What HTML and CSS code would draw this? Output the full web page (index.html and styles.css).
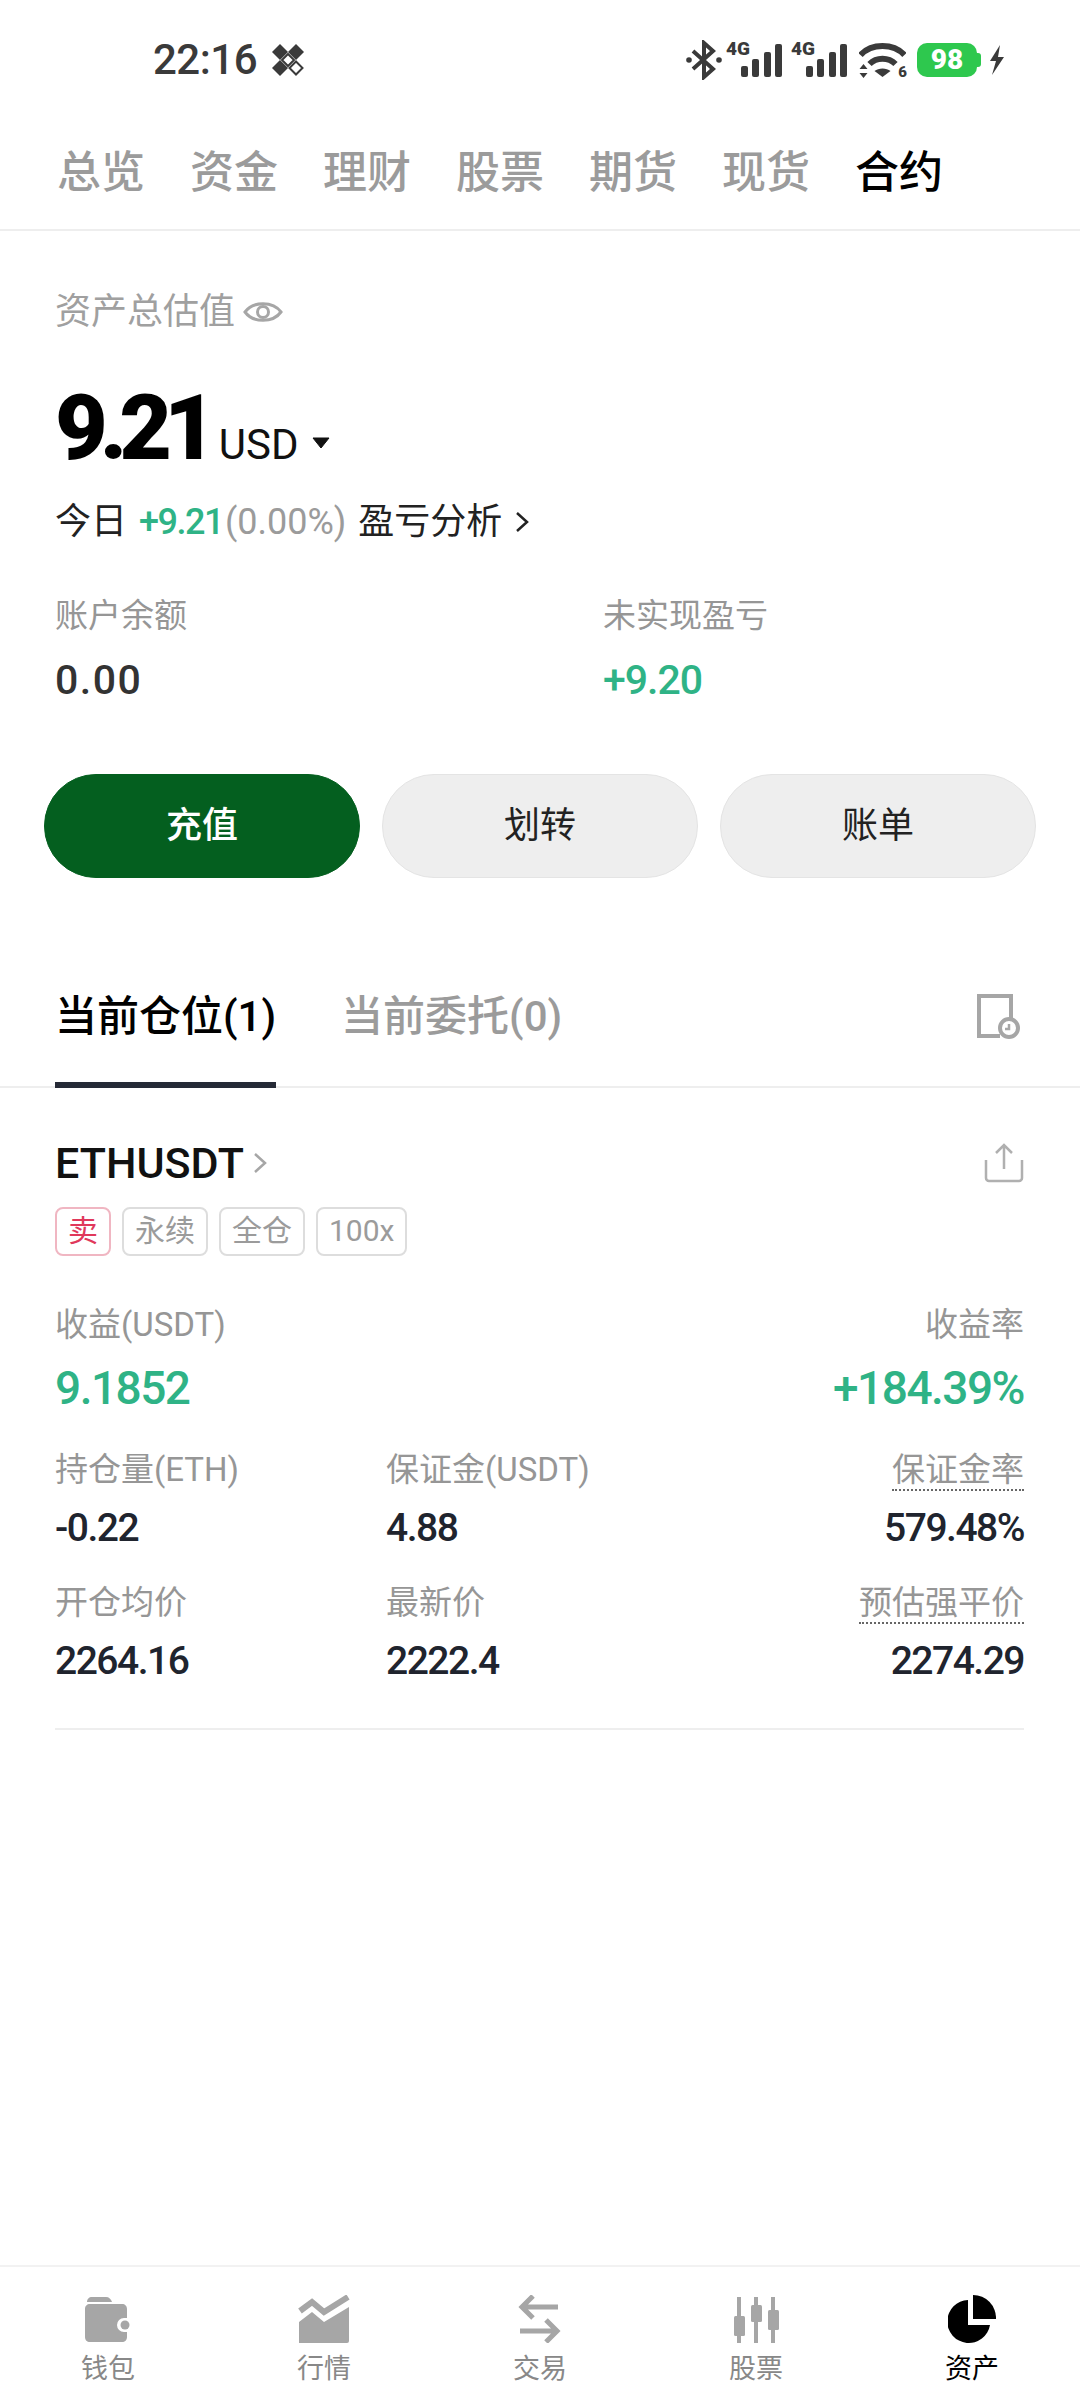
FILE: index.html
```html
<!DOCTYPE html>
<html>
<head>
	<meta charset="utf-8">
	<title>资产</title>
	<link rel="stylesheet" href="styles.css">
</head>
<body>
	<div class="page">
		<div class="status">
			<div class="status-left">
				<span class="clock">22:16</span>
				<svg class="notif" width="34" height="34" viewBox="0 0 34 34">
					<path d="M9 1l8 8-8 8-8-8z" fill="#3a3a3a"/>
					<path d="M25 1l8 8-8 8-8-8z" fill="#3a3a3a"/>
					<path d="M9 17l8 8-8 8-8-8z" fill="#3a3a3a"/>
					<path d="M25 18.500l6.500 6.500-6.500 6.500-6.500-6.500z" fill="none" stroke="#3a3a3a" stroke-width="2"/>
					<path d="M17 11l6 6-6 6-6-6z" fill="#fff" stroke="#3a3a3a" stroke-width="2"/>
				</svg>
			</div>
			<div class="status-right">
				<svg class="bt" width="36" height="40" viewBox="0 0 36 38">
					<path d="M7 10l20 18-9 8V2l9 8L7 28" fill="none" stroke="#3a3a3a" stroke-width="4"/>
					<circle cx="3" cy="19" r="2.800" fill="#3a3a3a"/>
					<circle cx="33" cy="19" r="2.800" fill="#3a3a3a"/>
				</svg>
				<div class="signal">
					<span class="net">4G</span>
					<i class="b1"></i><i class="b2"></i><i class="b3"></i><i class="b4"></i>
				</div>
				<div class="signal">
					<span class="net">4G</span>
					<i class="b1"></i><i class="b2"></i><i class="b3"></i><i class="b4"></i>
				</div>
				<div class="wifi">
					<svg width="47" height="38" viewBox="0 0 46 38">
						<path d="M1 14C12 2 34 2 45 14" fill="none" stroke="#3a3a3a" stroke-width="6"/>
						<path d="M10 23c7-7 19-7 26 0" fill="none" stroke="#3a3a3a" stroke-width="6"/>
						<path d="M15 30c4-3.500 12-3.500 16 0l-8 6z" fill="#3a3a3a"/>
						<path d="M3 23l4 5H-1zM3 37l4-5H-1z" fill="#3a3a3a" transform="translate(1 0)"/>
					</svg>
					<span class="wifi-num">6</span>
				</div>
				<div class="battery">98</div>
				<svg class="bolt" width="16" height="32" viewBox="0 0 16 30">
					<path d="M11 0L1 16h6L3 30l12-18H9z" fill="#3a3a3a"/>
				</svg>
			</div>
		</div>

		<div class="top-tabs">
			<span>总览</span><span>资金</span><span>理财</span><span>股票</span><span>期货</span><span>现货</span><span class="on">合约</span>
		</div>

		<div class="summary">
			<div class="total-label">
				资产总估值
				<svg width="40" height="30" viewBox="0 0 40 28">
					<path d="M2 14C10 3 30 3 38 14 30 25 10 25 2 14z" fill="none" stroke="#a6a6a6" stroke-width="3"/>
					<circle cx="20" cy="14" r="5.500" fill="none" stroke="#a6a6a6" stroke-width="3"/>
				</svg>
			</div>
			<div class="total">
				<span class="total-num">9.21</span>
				<span class="total-unit">USD</span>
				<svg width="18" height="12" viewBox="0 0 18 12"><path d="M1 1h16l-8 10z" fill="#111" stroke="#111" stroke-linejoin="round"/></svg>
			</div>
			<div class="today">
				<span>今日</span>
				<span class="green tight">+9.21</span><span class="grey tight2">(0.00%)</span>
				<span>盈亏分析</span>
				<svg width="16" height="24" viewBox="0 0 16 24"><path d="M3 3l10 9-10 9" fill="none" stroke="#222" stroke-width="2.500"/></svg>
			</div>
			<div class="balances">
				<div class="balance">
					<div class="label">账户余额</div>
					<div class="balance-num">0.00</div>
				</div>
				<div class="balance">
					<div class="label">未实现盈亏</div>
					<div class="balance-num up">+9.20</div>
				</div>
			</div>
		</div>

		<div class="actions">
			<div class="btn primary">充值</div>
			<div class="btn">划转</div>
			<div class="btn">账单</div>
		</div>

		<div class="pos-tabs">
			<div class="pos-tab on">当前仓位(1)</div>
			<div class="pos-tab">当前委托(0)</div>
			<svg class="pos-history" width="44" height="46" viewBox="0 0 44 46">
				<path d="M24 42H3V2h32v22" fill="none" stroke="#a6a6a6" stroke-width="4"/>
				<circle cx="33" cy="34" r="9" fill="#fff" stroke="#a6a6a6" stroke-width="4"/>
				<path d="M33 30v5h-4" fill="none" stroke="#a6a6a6" stroke-width="2.500"/>
			</svg>
		</div>

		<div class="position">
			<div class="pos-head">
				<div class="symbol">
					<span>ETHUSDT</span>
					<svg width="16" height="24" viewBox="0 0 16 24"><path d="M3 3l10 9-10 9" fill="none" stroke="#a6a6a6" stroke-width="2.500"/></svg>
				</div>
				<svg class="share" width="40" height="40" viewBox="0 0 40 40">
					<path d="M20 26V3M12 10l8-8 8 8" fill="none" stroke="#b0b0b0" stroke-width="2.500"/>
					<path d="M2 17v18a3 3 0 0 0 3 3h30a3 3 0 0 0 3-3V17" fill="none" stroke="#b0b0b0" stroke-width="2.500"/>
				</svg>
			</div>
			<div class="tags">
				<span class="tag sell">卖</span><span class="tag">永续</span><span class="tag">全仓</span><span class="tag">100x</span>
			</div>
			<div class="profit">
				<div>
					<div class="label">收益(USDT)</div>
					<div class="profit-num">9.1852</div>
				</div>
				<div class="right">
					<div class="label">收益率</div>
					<div class="profit-num">+184.39%</div>
				</div>
			</div>
			<div class="stats">
				<div>
					<div class="label">持仓量(ETH)</div>
					<div class="stat-num">-0.22</div>
				</div>
				<div>
					<div class="label">保证金(USDT)</div>
					<div class="stat-num">4.88</div>
				</div>
				<div class="right">
					<div class="label"><span class="dotted">保证金率</span></div>
					<div class="stat-num">579.48%</div>
				</div>
				<div>
					<div class="label">开仓均价</div>
					<div class="stat-num">2264.16</div>
				</div>
				<div>
					<div class="label">最新价</div>
					<div class="stat-num">2222.4</div>
				</div>
				<div class="right">
					<div class="label"><span class="dotted">预估强平价</span></div>
					<div class="stat-num">2274.29</div>
				</div>
			</div>
		</div>

		<div class="spacer"></div>

		<div class="nav">
			<div class="nav-item">
				<svg width="48" height="48" viewBox="0 0 48 48">
					<path d="M3 7c0-3 2-5 5-5h14c3 0 5 2 6 5H3z" fill="#a6a6a6"/>
					<path d="M1 14c0-3 2-5 5-5h32c3 0 5 2 5 5v9h-3a7 7 0 0 0 0 14h3v5c0 3-2 5-5 5H6c-3 0-5-2-5-5z" fill="#a6a6a6"/>
					<circle cx="41" cy="30" r="4.500" fill="#a6a6a6"/>
				</svg>
				<span>钱包</span>
			</div>
			<div class="nav-item">
				<svg width="52" height="48" viewBox="0 0 52 48">
					<path d="M2 16l12-9 12 10L50 2" fill="none" stroke="#a6a6a6" stroke-width="6"/>
					<path d="M1 27l13-10 12 10 25-15v34a2 2 0 0 1-2 2H1z" fill="#a6a6a6"/>
				</svg>
				<span>行情</span>
			</div>
			<div class="nav-item">
				<svg width="44" height="48" viewBox="0 0 44 48">
					<path d="M40 12H4M15 1L4 12l11 11" fill="none" stroke="#a6a6a6" stroke-width="5"/>
					<path d="M2 36h36M28 25l11 11-11 11" fill="none" stroke="#a6a6a6" stroke-width="5"/>
				</svg>
				<span>交易</span>
			</div>
			<div class="nav-item">
				<svg width="46" height="48" viewBox="0 0 46 48">
					<path d="M6 2v46M23 2v46M40 2v46" stroke="#a6a6a6" stroke-width="4"/>
					<rect x="1" y="21" width="11" height="20" rx="1.500" fill="#a6a6a6"/>
					<rect x="18" y="10" width="11" height="17" rx="1.500" fill="#a6a6a6"/>
					<rect x="35" y="15" width="11" height="20" rx="1.500" fill="#a6a6a6"/>
				</svg>
				<span>股票</span>
			</div>
			<div class="nav-item on">
				<svg width="48" height="48" viewBox="0 0 48 48">
					<path d="M20 5a21.500 21.500 0 1 0 22 25H20z" fill="#000"/>
					<path d="M25 0a23 23 0 0 1 23 24H25z" fill="#000"/>
				</svg>
				<span>资产</span>
			</div>
		</div>
	</div>
</body>
</html>
```

FILE: styles.css
```css
* {
	box-sizing: border-box;
}

html, body {
	margin: 0;
	padding: 0;
	background: #fff;
}

body {
	font-family: Roboto, "Noto Sans CJK SC", sans-serif;
	color: #111;
}

.page {
	width: 1080px;
	height: 2400px;
	display: flex;
	flex-direction: column;
}

.green {
	color: #2fb386;
}

.grey {
	color: #9b9b9b;
}

.right {
	text-align: right;
}

/* status bar */
.status {
	height: 120px;
	padding: 38px 75px 0 153px;
	display: flex;
	justify-content: space-between;
	align-items: flex-start;
}

.status-left {
	display: flex;
	align-items: center;
	gap: 14px;
}

.clock {
	font-size: 42px;
	font-weight: 500;
	color: #3a3a3a;
	line-height: 44px;
	letter-spacing: -0.500px;
}

.status-right {
	display: flex;
	align-items: center;
	height: 44px;
}

.signal {
	position: relative;
	width: 56px;
	height: 34px;
	margin-left: 4px;
	display: flex;
	align-items: flex-end;
	justify-content: flex-end;
	gap: 4.500px;
}

.signal + .signal {
	margin-left: 9px;
}

.signal i {
	display: block;
	width: 7px;
	background: #3a3a3a;
	border-radius: 2px;
}

.signal .b1 { height: 11px; }
.signal .b2 { height: 18px; }
.signal .b3 { height: 25px; }
.signal .b4 { height: 33px; }

.net {
	position: absolute;
	left: 0;
	top: -5px;
	font-size: 19px;
	line-height: 22px;
	font-weight: 900;
	color: #3a3a3a;
}

.wifi {
	position: relative;
	width: 47px;
	height: 38px;
	margin-left: 12px;
}

.wifi-num {
	position: absolute;
	right: -1px;
	bottom: -1px;
	font-size: 15px;
	line-height: 16px;
	font-weight: 900;
	color: #3a3a3a;
}

.battery {
	position: relative;
	width: 60px;
	height: 34px;
	margin-left: 11px;
	margin-right: 12px;
	border-radius: 10px;
	background: #2ec84e;
	color: #fff;
	font-size: 28px;
	font-weight: 900;
	line-height: 34px;
	text-align: center;
}

.battery::after {
	content: "";
	position: absolute;
	right: -4px;
	top: 10px;
	width: 4px;
	height: 14px;
	background: #2ec84e;
	border-radius: 0 3px 3px 0;
}

/* top tabs */
.top-tabs {
	height: 111px;
	padding: 22px 0 0 57px;
	display: flex;
	gap: 45px;
	font-size: 44px;
	line-height: 62px;
	font-weight: 500;
	color: #9b9b9b;
	border-bottom: 2px solid #eee;
}

.top-tabs span {
	width: 88px;
}

.top-tabs .on {
	color: #000;
}

/* asset summary */
.summary {
	padding: 0 56px 0 55px;
}

.total-label {
	margin-top: 55px;
	display: flex;
	align-items: center;
	gap: 8px;
	font-size: 36px;
	line-height: 52px;
	color: #a0a0a0;
}

.total {
	margin-top: 44px;
	display: flex;
	align-items: baseline;
	height: 92px;
}

.total-num {
	font-size: 91px;
	line-height: 92px;
	font-weight: 900;
	letter-spacing: -8px;
	color: #000;
}

.total-unit {
	margin-left: 10px;
	font-size: 42px;
	color: #111;
}

.total svg {
	margin-left: 13px;
	align-self: center;
	margin-top: 30px;
}

.today {
	margin-top: 23px;
	display: flex;
	align-items: center;
	font-size: 36px;
	line-height: 50px;
	color: #222;
	gap: 12px;
}

.today .tight {
	font-weight: 500;
	letter-spacing: -1.500px;
	margin-left: 0;
}

.today .tight2 {
	margin-left: -10px;
}

.label {
	font-size: 33px;
	line-height: 48px;
	color: #969696;
}

.balances {
	margin-top: 45px;
	display: grid;
	grid-template-columns: 548px 1fr;
}

.balance-num {
	margin-top: 15px;
	font-size: 41px;
	line-height: 50px;
	font-weight: 500;
	letter-spacing: 1.500px;
	color: #333;
}

.balance-num.up {
	letter-spacing: -1px;
	color: #2fb386;
}

/* buttons */
.actions {
	margin-top: 69px;
	padding: 0 44px;
	display: grid;
	grid-template-columns: repeat(3, 316px);
	gap: 22px;
}

.btn {
	height: 104px;
	border-radius: 52px;
	background: #eee;
	border: 1px solid #e4e4e4;
	font-size: 36px;
	line-height: 102px;
	text-align: center;
	color: #222;
}

.btn.primary {
	background: #045f1f;
	border-color: #045f1f;
	color: #fff;
	font-weight: 500;
}

/* position tabs */
.pos-tabs {
	margin-top: 80px;
	height: 130px;
	padding: 0 56px 0 55px;
	display: flex;
	gap: 65px;
	position: relative;
	border-bottom: 2px solid #eee;
}

.pos-tab {
	height: 130px;
	padding-top: 30px;
	font-size: 42px;
	line-height: 58px;
	font-weight: 500;
	color: #9b9b9b;
	white-space: nowrap;
}

.pos-tab.on {
	color: #000;
	border-bottom: 6px solid #252a36;
}

.pos-history {
	margin-left: auto;
	margin-top: 36px;
	margin-right: 4px;
}

/* position card */
.position {
	margin: 0 56px 0 55px;
	padding-bottom: 42px;
	border-bottom: 2px solid #eee;
}

.pos-head {
	margin-top: 49px;
	height: 52px;
	display: flex;
	justify-content: space-between;
	align-items: center;
}

.symbol {
	display: flex;
	align-items: center;
	gap: 8px;
	font-size: 43px;
	font-weight: 500;
	color: #111;
}

.tags {
	margin-top: 18px;
	display: flex;
	gap: 11px;
}

.tag {
	height: 49px;
	padding: 0 11px;
	border: 2px solid #ddd;
	border-radius: 8px;
	font-size: 30px;
	line-height: 43px;
	color: #9b9b9b;
}

.tag.sell {
	color: #e0385b;
	border-color: #f0b6c2;
}

.profit {
	margin-top: 45px;
	display: flex;
	justify-content: space-between;
}

.profit-num {
	margin-top: 11px;
	font-size: 46px;
	line-height: 56px;
	font-weight: 500;
	letter-spacing: -1.500px;
	color: #2fb386;
}

.stats {
	margin-top: 30px;
	display: grid;
	grid-template-columns: 331px 1fr 1fr;
	row-gap: 26px;
}

.stat-num {
	margin-top: 9px;
	font-size: 39px;
	line-height: 50px;
	font-weight: 500;
	letter-spacing: -1.500px;
	color: #20242e;
}

.dotted {
	border-bottom: 2px dotted #666;
}

.spacer {
	flex: 1;
}

/* bottom nav */
.nav {
	height: 135px;
	padding-top: 28px;
	display: grid;
	grid-template-columns: repeat(5, 216px);
	border-top: 2px solid #f2f2f2;
}

.nav-item {
	display: flex;
	flex-direction: column;
	align-items: center;
	font-size: 27px;
	line-height: 36px;
	gap: 8px;
	color: #888;
}

.nav-item svg {
	flex: none;
}

.nav-item.on {
	color: #000;
}
```
